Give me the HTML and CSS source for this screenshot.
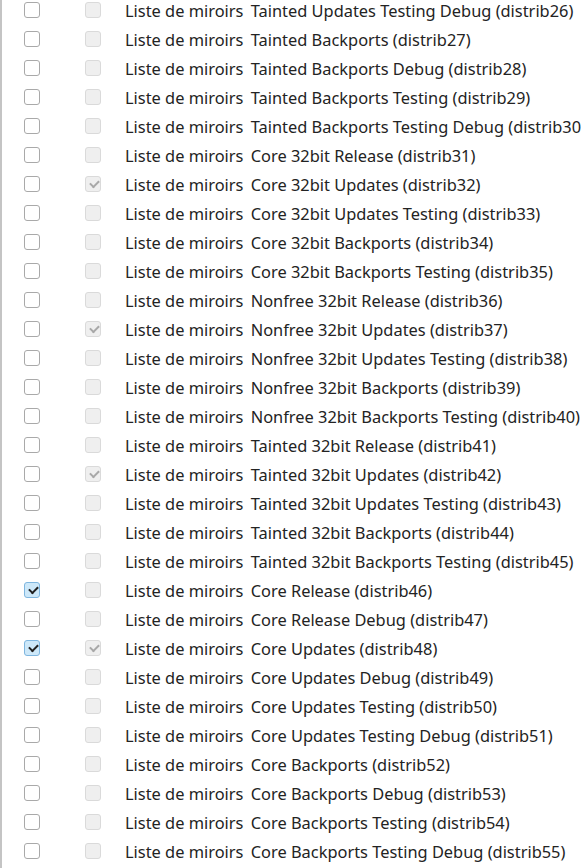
FILE: index.html
```html
<!DOCTYPE html>
<html lang="fr">
<head>
    <meta charset="UTF-8">
    <title>Liste de miroirs</title>
    <link rel="stylesheet" href="styles.css">
</head>
<body>
    <div class="panel">
        <div class="mirrors">
            <div class="row"><span class="c1"><span class="box"></span></span><span class="c2"><span class="box off"></span></span><span class="name"><span>Liste de miroirs</span> <span>Tainted Updates Testing Debug (distrib26)</span></span></div>
            <div class="row"><span class="c1"><span class="box"></span></span><span class="c2"><span class="box off"></span></span><span class="name"><span>Liste de miroirs</span> <span>Tainted Backports (distrib27)</span></span></div>
            <div class="row"><span class="c1"><span class="box"></span></span><span class="c2"><span class="box off"></span></span><span class="name"><span>Liste de miroirs</span> <span>Tainted Backports Debug (distrib28)</span></span></div>
            <div class="row"><span class="c1"><span class="box"></span></span><span class="c2"><span class="box off"></span></span><span class="name"><span>Liste de miroirs</span> <span>Tainted Backports Testing (distrib29)</span></span></div>
            <div class="row"><span class="c1"><span class="box"></span></span><span class="c2"><span class="box off"></span></span><span class="name"><span>Liste de miroirs</span> <span>Tainted Backports Testing Debug (distrib30)</span></span></div>
            <div class="row"><span class="c1"><span class="box"></span></span><span class="c2"><span class="box off"></span></span><span class="name"><span>Liste de miroirs</span> <span>Core 32bit Release (distrib31)</span></span></div>
            <div class="row"><span class="c1"><span class="box"></span></span><span class="c2"><span class="box off on"></span></span><span class="name"><span>Liste de miroirs</span> <span>Core 32bit Updates (distrib32)</span></span></div>
            <div class="row"><span class="c1"><span class="box"></span></span><span class="c2"><span class="box off"></span></span><span class="name"><span>Liste de miroirs</span> <span>Core 32bit Updates Testing (distrib33)</span></span></div>
            <div class="row"><span class="c1"><span class="box"></span></span><span class="c2"><span class="box off"></span></span><span class="name"><span>Liste de miroirs</span> <span>Core 32bit Backports (distrib34)</span></span></div>
            <div class="row"><span class="c1"><span class="box"></span></span><span class="c2"><span class="box off"></span></span><span class="name"><span>Liste de miroirs</span> <span>Core 32bit Backports Testing (distrib35)</span></span></div>
            <div class="row"><span class="c1"><span class="box"></span></span><span class="c2"><span class="box off"></span></span><span class="name"><span>Liste de miroirs</span> <span>Nonfree 32bit Release (distrib36)</span></span></div>
            <div class="row"><span class="c1"><span class="box"></span></span><span class="c2"><span class="box off on"></span></span><span class="name"><span>Liste de miroirs</span> <span>Nonfree 32bit Updates (distrib37)</span></span></div>
            <div class="row"><span class="c1"><span class="box"></span></span><span class="c2"><span class="box off"></span></span><span class="name"><span>Liste de miroirs</span> <span>Nonfree 32bit Updates Testing (distrib38)</span></span></div>
            <div class="row"><span class="c1"><span class="box"></span></span><span class="c2"><span class="box off"></span></span><span class="name"><span>Liste de miroirs</span> <span>Nonfree 32bit Backports (distrib39)</span></span></div>
            <div class="row"><span class="c1"><span class="box"></span></span><span class="c2"><span class="box off"></span></span><span class="name"><span>Liste de miroirs</span> <span>Nonfree 32bit Backports Testing (distrib40)</span></span></div>
            <div class="row"><span class="c1"><span class="box"></span></span><span class="c2"><span class="box off"></span></span><span class="name"><span>Liste de miroirs</span> <span>Tainted 32bit Release (distrib41)</span></span></div>
            <div class="row"><span class="c1"><span class="box"></span></span><span class="c2"><span class="box off on"></span></span><span class="name"><span>Liste de miroirs</span> <span>Tainted 32bit Updates (distrib42)</span></span></div>
            <div class="row"><span class="c1"><span class="box"></span></span><span class="c2"><span class="box off"></span></span><span class="name"><span>Liste de miroirs</span> <span>Tainted 32bit Updates Testing (distrib43)</span></span></div>
            <div class="row"><span class="c1"><span class="box"></span></span><span class="c2"><span class="box off"></span></span><span class="name"><span>Liste de miroirs</span> <span>Tainted 32bit Backports (distrib44)</span></span></div>
            <div class="row"><span class="c1"><span class="box"></span></span><span class="c2"><span class="box off"></span></span><span class="name"><span>Liste de miroirs</span> <span>Tainted 32bit Backports Testing (distrib45)</span></span></div>
            <div class="row"><span class="c1"><span class="box on"></span></span><span class="c2"><span class="box off"></span></span><span class="name"><span>Liste de miroirs</span> <span>Core Release (distrib46)</span></span></div>
            <div class="row"><span class="c1"><span class="box"></span></span><span class="c2"><span class="box off"></span></span><span class="name"><span>Liste de miroirs</span> <span>Core Release Debug (distrib47)</span></span></div>
            <div class="row"><span class="c1"><span class="box on"></span></span><span class="c2"><span class="box off on"></span></span><span class="name"><span>Liste de miroirs</span> <span>Core Updates (distrib48)</span></span></div>
            <div class="row"><span class="c1"><span class="box"></span></span><span class="c2"><span class="box off"></span></span><span class="name"><span>Liste de miroirs</span> <span>Core Updates Debug (distrib49)</span></span></div>
            <div class="row"><span class="c1"><span class="box"></span></span><span class="c2"><span class="box off"></span></span><span class="name"><span>Liste de miroirs</span> <span>Core Updates Testing (distrib50)</span></span></div>
            <div class="row"><span class="c1"><span class="box"></span></span><span class="c2"><span class="box off"></span></span><span class="name"><span>Liste de miroirs</span> <span>Core Updates Testing Debug (distrib51)</span></span></div>
            <div class="row"><span class="c1"><span class="box"></span></span><span class="c2"><span class="box off"></span></span><span class="name"><span>Liste de miroirs</span> <span>Core Backports (distrib52)</span></span></div>
            <div class="row"><span class="c1"><span class="box"></span></span><span class="c2"><span class="box off"></span></span><span class="name"><span>Liste de miroirs</span> <span>Core Backports Debug (distrib53)</span></span></div>
            <div class="row"><span class="c1"><span class="box"></span></span><span class="c2"><span class="box off"></span></span><span class="name"><span>Liste de miroirs</span> <span>Core Backports Testing (distrib54)</span></span></div>
            <div class="row"><span class="c1"><span class="box"></span></span><span class="c2"><span class="box off"></span></span><span class="name"><span>Liste de miroirs</span> <span>Core Backports Testing Debug (distrib55)</span></span></div>
        </div>
    </div>
</body>
</html>
```

FILE: styles.css
```css
html, body {
    margin: 0;
    padding: 0;
    background: #ffffff;
    overflow: hidden;
}
body {
    font-family: "Noto Sans", sans-serif;
    font-size: 16.4px;
    color: #232323;
}
.panel {
    border-left: 2px solid #c4c4c4;
    height: 868px;
    overflow: hidden;
}
.mirrors {
    margin-top: -4px;
}
.row {
    display: flex;
    align-items: center;
    height: 29px;
    white-space: nowrap;
}
.c1 {
    flex: none;
    box-sizing: border-box;
    width: 83px;
    padding-left: 22px;
}
.c2 {
    flex: none;
    width: 40px;
}
.name {
    flex: none;
}
.name span + span {
    margin-left: 3px;
}
.box {
    display: block;
    box-sizing: border-box;
    width: 16px;
    height: 16px;
    margin-top: -1px;
    border: 1px solid #a9a9a9;
    border-radius: 3px;
    background: #ffffff;
    position: relative;
}
.box.off {
    border-color: #dadada;
    background: #efefef;
}
.box.on {
    background: #cde8f9;
    border-color: #7fb6df;
}
.box.off.on {
    background: #efefef;
    border-color: #dadada;
}
.box.on::after {
    content: "";
    position: absolute;
    left: 4px;
    top: 3px;
    width: 7px;
    height: 4px;
    border-left: 2px solid #202020;
    border-bottom: 2px solid #202020;
    transform: rotate(-45deg);
}
.box.off.on::after {
    border-color: #a8a8a8;
}
```
